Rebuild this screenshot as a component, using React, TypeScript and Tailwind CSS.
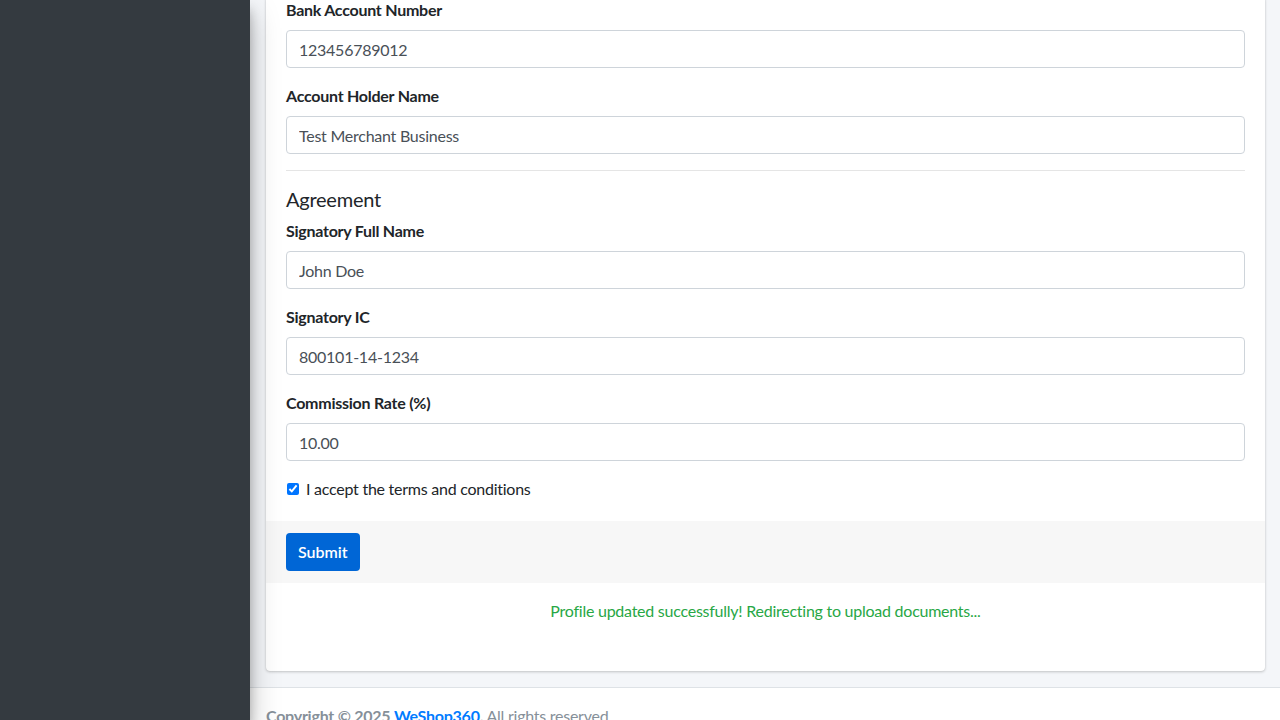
import React from 'react';

const font = { fontFamily: 'Lato, "Noto Sans", sans-serif' };

interface FieldProps {
  label: string;
  value: string;
}

const Field: React.FC<FieldProps> = ({ label, value }) => (
  <div className="mb-4">
    <label className="block mb-2 text-base leading-6 font-bold text-[#212529]">{label}</label>
    <input
      readOnly
      value={value}
      className="block w-full h-[38px] px-3 py-1.5 text-base tracking-[-0.25px] text-[#495057] bg-white border border-[#ced4da] rounded outline-none"
    />
  </div>
);

export default function App() {
  return (
    <div className="flex h-[720px] overflow-hidden bg-[#f4f6f9] tracking-[-0.25px]" style={font}>
      {/* sidebar */}
      <aside className="relative z-10 w-[250px] shrink-0 bg-[#343a40] shadow-[0_14px_28px_rgba(0,0,0,0.25),0_10px_10px_rgba(0,0,0,0.22)]" />

      <div className="flex flex-col flex-1 min-w-0">
        <main className="pl-4 pr-[15px]">
          <div className="bg-white rounded-b shadow-[0_0_1px_rgba(0,0,0,0.125),0_1px_3px_rgba(0,0,0,0.2)]">
            <div className="px-5 pb-5 -mt-[2px]">
              <Field label="Bank Account Number" value="123456789012" />
              <Field label="Account Holder Name" value="Test Merchant Business" />

              <hr className="mb-4 border-t border-[rgba(0,0,0,0.1)]" />

              <h5 className="mb-2 text-xl leading-6 font-normal text-[#212529]">Agreement</h5>
              <Field label="Signatory Full Name" value="John Doe" />
              <Field label="Signatory IC" value="800101-14-1234" />
              <Field label="Commission Rate (%)" value="10.00" />

              <div className="flex items-center h-6 text-base text-[#212529]">
                <input type="checkbox" checked readOnly className="m-0 ml-px mr-[7px] -mt-px w-[12px] h-[12px] accent-[#0075ff]" />
                <span>I accept the terms and conditions</span>
              </div>
            </div>

            <div className="px-5 py-3 bg-[#f7f7f7]">
              <button className="h-[38px] px-3 text-base tracking-normal font-semibold text-white bg-[#0066d6] rounded">Submit</button>
            </div>

            <div className="pt-4 pb-12 text-center text-base leading-6 text-[#28a745]">
              Profile updated successfully! Redirecting to upload documents...
            </div>
          </div>
        </main>

        <footer className="mt-4 px-4 py-4 bg-white border-t border-[#dee2e6] text-base leading-6 text-[#869099]">
          <strong>
            Copyright &copy; 2025 <a className="text-[#007bff]">WeShop360</a>.
          </strong>{' '}
          All rights reserved
        </footer>
      </div>
    </div>
  );
}
